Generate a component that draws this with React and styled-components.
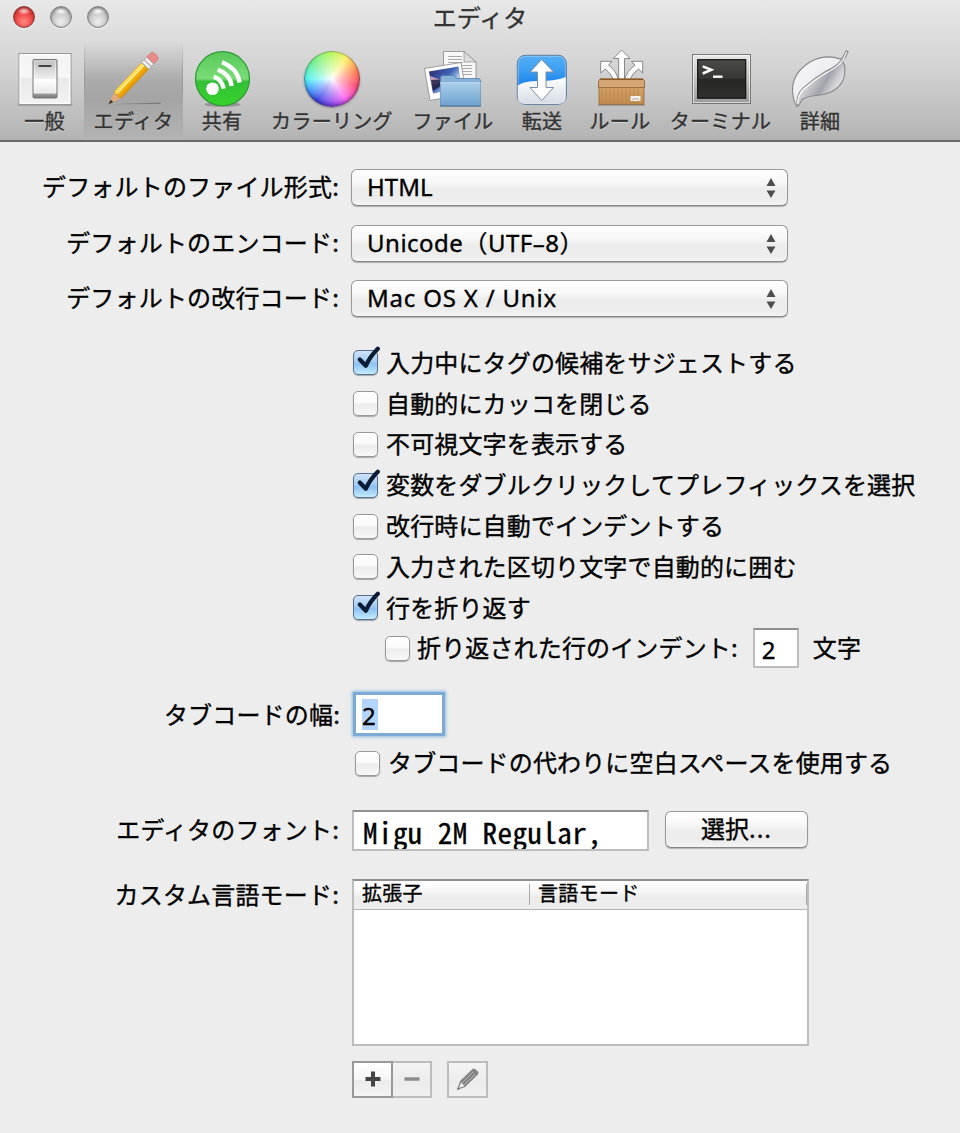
import React from 'react';
import styled, { createGlobalStyle, css } from 'styled-components';

const GlobalStyle = createGlobalStyle`
  * { box-sizing: border-box; }
  body {
    margin: 0;
    background: #ededed;
    color: #000;
    font-family: 'Noto Sans', 'Noto Sans CJK JP', sans-serif;
    font-size: 24px;
    -webkit-text-stroke: 0.35px currentColor;
  }
`;

const jp = css`font-family: 'Noto Sans CJK JP', sans-serif;`;

const Window = styled.div`
  width: 960px;
  height: 1133px;
  overflow: hidden;
  background: #ededed;
`;

const Header = styled.header`
  height: 142px;
  background: linear-gradient(#e8e8e8, #d2d2d2 50%, #b3b3b3);
  border-bottom: 2px solid #6a6a6a;
`;

const TitleBar = styled.div`
  display: grid;
  grid-template-columns: 110px 1fr 110px;
  height: 42px;
`;

const Lights = styled.div`
  display: flex;
  gap: 15px;
  padding: 6px 0 0 13px;
`;

const Light = styled.span`
  width: 22px;
  height: 22px;
  border-radius: 50%;
  border: 1px solid ${(p) => (p.$red ? '#8f3a3a' : '#808080')};
  background: ${(p) =>
    p.$red
      ? 'radial-gradient(ellipse 7px 4px at 50% 20%, #ffd6d6, transparent), radial-gradient(circle at 50% 75%, #ff8a80 0, #f04a4a 45%, #d0282c 100%)'
      : 'radial-gradient(ellipse 7px 4px at 50% 20%, #fff, transparent), radial-gradient(circle at 50% 75%, #efefef 0, #c9c9c9 50%, #a0a0a0 100%)'};
  box-shadow: inset 0 1px 3px rgba(0, 0, 0, 0.35), 0 1px 0 rgba(255, 255, 255, 0.6);
`;

const Title = styled.div`
  ${jp}
  color: #333;
  font-size: 24px;
  line-height: 33px;
  text-align: center;
`;

const Toolbar = styled.nav`
  display: flex;
  padding-left: 5px;
`;

const Tool = styled.div`
  display: flex;
  flex-direction: column;
  align-items: center;
  width: ${(p) => p.$w}px;
  height: 95px;
  padding-top: 6px;
  ${(p) =>
    p.$active &&
    css`
      background: linear-gradient(rgba(0, 0, 0, 0), rgba(0, 0, 0, 0.17) 40%, rgba(0, 0, 0, 0.17) 60%, rgba(0, 0, 0, 0.02));
      border: solid;
      border-width: 0 1px;
      border-image: linear-gradient(transparent, #999 45%, #aaa 70%, transparent) 1;
    `}
`;

const ToolLabel = styled.span`
  ${jp}
  font-size: 20px;
  line-height: 22px;
  letter-spacing: 0.3px;
  color: #333;
  white-space: nowrap;
  text-shadow: 0 1px 0 rgba(255, 255, 255, 0.45);
  -webkit-text-stroke-width: 0.4px;
`;

const IconBox = styled.div`
  height: 62px;
  display: flex;
  justify-content: center;
`;

const Wheel = styled.div`
  width: 56px;
  height: 56px;
  margin-top: 3px;
  border-radius: 50%;
  background:
    radial-gradient(circle, #fff 0, rgba(255, 255, 255, 0.6) 22%, rgba(255, 255, 255, 0) 66%),
    conic-gradient(#b8f860, #fff06a 35deg, #ff7850 75deg, #ff4a70 105deg, #ff60f0 145deg, #9048f0 180deg, #4048e8 215deg, #40a0ff 245deg, #50f4f0 270deg, #70f090 310deg, #b8f860);
  box-shadow: inset 0 0 0 1px rgba(60, 60, 60, 0.35), inset 0 -2px 4px rgba(0, 0, 60, 0.4), 0 1px 2px rgba(0, 0, 0, 0.35);
`;

const Svg = ({ cx, w = 64, children }) => (
  <svg width={w} height="62" viewBox={`${cx - w / 2} 48 ${w} 62`}>{children}</svg>
);

const Grad = ({ id, stops, x2 = 0, y2 = 1 }) => (
  <linearGradient id={id} x1="0" y1="0" x2={x2} y2={y2}>
    {stops.map(([o, c]) => <stop key={o} offset={o} stopColor={c} />)}
  </linearGradient>
);

const SwitchIcon = () => (
  <Svg cx={44.5}>
    <defs>
      <Grad id="plate" stops={[[0, '#f4f4f4'], [0.46, '#f6f6f6'], [0.5, '#e9e9e9'], [1, '#f3f3f3']]} />
      <Grad id="rocker" stops={[[0, '#bdbdbd'], [0.5, '#efefef'], [0.52, '#fff'], [0.86, '#e8e8e8'], [0.9, '#999'], [1, '#777']]} />
    </defs>
    <path d="M17 105.3h55" stroke="#777" strokeOpacity=".4" strokeWidth="1.2" />
    <rect x="18.5" y="53.5" width="52" height="51" fill="url(#plate)" stroke="#999" />
    <rect x="19.7" y="54.7" width="49.5" height="48.6" fill="none" stroke="#fff" />
    <rect x="32.5" y="59.5" width="24" height="38.5" rx="1" fill="url(#rocker)" stroke="#777" />
    <rect x="34" y="61" width="21" height="32" fill="none" stroke="#fff" strokeOpacity=".45" />
    <path d="M38 66h13" stroke="#444" strokeWidth="2" />
  </Svg>
);

const PencilIcon = () => (
  <Svg cx={133.5}>
    <defs>
      <Grad id="shaft" stops={[[0, '#ffe36a'], [0.35, '#ffd43a'], [0.5, '#f5b312'], [1, '#e09000']]} />
    </defs>
    <path d="M110 104.3 160 102.5V104Z" fill="#666" opacity=".65" />
    <g transform="translate(108 104.5) rotate(-46.5)">
      <path d="M0 0 14-4.8V4.8Z" fill="#e0a878" />
      <path d="M0 0 5-1.8V1.8Z" fill="#333" />
      <path d="M14-4.8 12-2 14 0 12 2.6 14 4.8H53V-4.8Z" fill="url(#shaft)" stroke="#c08a18" strokeWidth=".5" />
      <path d="M14-1.5H53" stroke="#fff3a0" strokeWidth="1.2" />
      <path d="M53-5h8V5h-8Z" fill="#c8c8c8" stroke="#999" strokeWidth=".5" />
      <path d="M55-4.5v9M59-4.5v9" stroke="#fff" strokeWidth="1.5" />
      <path d="M61-5h5q3 0 3 5t-3 5h-5Z" fill="#e98b8b" stroke="#cf7070" strokeWidth=".5" />
    </g>
  </Svg>
);

const ShareIcon = () => (
  <Svg cx={222}>
    <defs>
      <Grad id="green" stops={[[0, '#55c95a'], [0.5, '#7bdc76'], [0.55, '#35bf38'], [1, '#35d42c']]} />
    </defs>
    <ellipse cx="222.5" cy="104.5" rx="18" ry="2.5" fill="#555" opacity=".4" />
    <circle cx="222.5" cy="78.7" r="27" fill="url(#green)" stroke="#2f9b35" strokeWidth="1.3" />
    <circle cx="212.5" cy="88.7" r="6.3" fill="#fff" />
    <g fill="none" stroke="#fff" strokeWidth="4.3">
      <path d="M213.7 76.8Q222 79 223.7 88.7" />
      <path d="M217.7 69.8Q230 74 231.7 86" />
      <path d="M222 62.3Q237 68 239.7 82.5" />
    </g>
  </Svg>
);

const FilesIcon = () => (
  <Svg cx={453}>
    <defs>
      <Grad id="folder" stops={[[0, '#a9cdea'], [1, '#6ea3cf']]} />
      <Grad id="photo" x2={1} y2={0.8} stops={[[0, '#29246a'], [0.5, '#3f62b5'], [0.75, '#b7d0ee'], [1, '#2e3d86']]} />
    </defs>
    <path d="M443.5 51.5h20.5l12 10.5v34h-32.5Z" fill="#f7f7f7" stroke="#888" strokeWidth=".8" />
    <path d="M464 51.5v10.5h12Z" fill="#ddd" stroke="#888" strokeWidth=".7" />
    <path d="M448 56.5h14M448 59.5h14M448 62.5h15M448 65.5h24M448 68.5h24M448 71.5h24M448 74.5h24" stroke="#aaa" strokeWidth="1" />
    <path d="M424.5 68.5 461 62.5 466 94 430 100.5Z" fill="#fff" stroke="#888" strokeWidth=".8" />
    <path d="M429 71.5 458.5 66.5 462 88 433 93.5Z" fill="url(#photo)" />
    <path d="M430 76 444 81 432 86Z" fill="#e8b0c0" opacity=".8" />
    <path d="M431 80 449 79 438 88 433 91Z" fill="#232047" opacity=".85" />
    <path d="M440.5 106V78q0-2.5 2.5-2.5h11q1.5 0 2.5 3H478q2.5 0 2.5 2.5v25Z" fill="#86b2d8" stroke="#527fa8" strokeWidth=".8" />
    <path d="M440.5 83h40v22.5h-40Z" fill="url(#folder)" />
    <path d="M440 82.8h40.5" stroke="#cae2f5" />
    <path d="M440 106h41" stroke="#4a6e90" />
  </Svg>
);

const TransferIcon = () => (
  <Svg cx={542}>
    <defs>
      <Grad id="sky" stops={[[0, '#55b0f6'], [0.3, '#3d9ff2'], [0.6, '#1a82ea'], [1, '#2a8eee']]} />
      <Grad id="snow" stops={[[0, '#fff'], [1, '#d6dce4']]} />
    </defs>
    <rect x="517.3" y="55.3" width="49" height="49" rx="8" fill="url(#sky)" stroke="#5d7a9a" />
    <path d="M517.8 86Q522 81 540 81 556 81 565.8 77V97Q565.8 104 558.5 104H525Q517.8 104 517.8 97Z" fill="url(#snow)" />
    <rect x="518.3" y="56.3" width="47" height="47" rx="7" fill="none" stroke="#fff" strokeOpacity=".3" />
    <path d="M541.7 59.5 553.5 72H546V87.5H553.5L541.7 100.5 530 87.5H537.5V72H530Z" fill="#fff" stroke="#7c8fa5" strokeWidth="1" strokeLinejoin="round" />
  </Svg>
);

const RulesIcon = () => (
  <Svg cx={620}>
    <defs><Grad id="box" stops={[[0, '#d9a869'], [1, '#bd884d']]} /></defs>
    <g fill="#fff" stroke="#7d7d7d" strokeWidth=".9" strokeLinejoin="round">
      <path d="M600.7 61.3H612L608.5 65.2Q616.5 70.5 618.5 80.5H613.5Q611.5 73.5 605 69L600.7 73Z" />
      <path d="M642.7 61.3H631.5L635 65.2Q627 70.5 624.5 80.5H629.5Q632 73.5 638.5 69L642.7 73Z" />
      <path d="M621.7 50 630 58.5H624.5V81H618.7V58.5H613.2Z" />
    </g>
    <rect x="599" y="84" width="45" height="20.5" fill="url(#box)" stroke="#94683a" strokeWidth=".8" />
    <path d="M602 88v16M606 88v16M610 88v16M614 88v16M618 88v16M622 88v16M626 88v16M630 88v16M634 88v16M638 88v16" stroke="#b98449" strokeWidth=".7" />
    <path d="M600 79H643L644.5 81V87.5H598.5V81Z" fill="#d5a573" stroke="#8d6234" strokeWidth=".8" />
    <path d="M600 79.3h43" stroke="#8d5b27" strokeWidth="1.5" />
    <rect x="630.5" y="96" width="10" height="5" fill="#f5f0e8" />
    <path d="M632 99.5q3-2 7 0" stroke="#aaa" fill="none" />
    <path d="M598 105.3h47" stroke="#666" opacity=".5" />
  </Svg>
);

const TerminalIcon = () => (
  <Svg cx={721}>
    <defs>
      <Grad id="frame" stops={[[0, '#e9e9e9'], [1, '#9b9b9b']]} />
      <Grad id="screen" stops={[[0, '#4b4b48'], [0.48, '#373734'], [0.52, '#272724'], [1, '#30302c']]} />
    </defs>
    <rect x="692.5" y="54.5" width="58" height="49" fill="url(#frame)" stroke="#777" />
    <rect x="693.5" y="55.5" width="56" height="47" fill="none" stroke="#fff" strokeOpacity=".6" />
    <rect x="697.7" y="59.7" width="48" height="38.5" fill="url(#screen)" stroke="#111" strokeWidth="1.2" />
    <path d="M702.7 66.3 711.3 69.8 702.7 73.5" fill="none" stroke="#fff" strokeWidth="2.5" />
    <path d="M713 76.7h9.5" stroke="#fff" strokeWidth="2.4" />
  </Svg>
);

const LeafIcon = () => (
  <Svg cx={820}>
    <defs>
      <Grad id="leafTop" x2={1} stops={[[0, '#f8f8fa'], [0.5, '#ededf0'], [1, '#dcdce0']]} />
      <Grad id="leafLow" x2={1} y2={0.6} stops={[[0, '#eee'], [0.4, '#dedee2'], [0.68, '#a2a2aa'], [0.82, '#d0d0d5'], [1, '#eee']]} />
    </defs>
    <path d="M846 51Q843 58 840.5 59 825 53.500 810 62 792.5 73 792.5 90 793 101 797 106.500 799 106 802 99.500 806 96.500 820 95 838 92.500 843.500 79 847 69 842.500 60.500 846.500 57 848 51.500Z" fill="url(#leafLow)" stroke="#888" strokeWidth="1.1" />
    <path d="M841 60Q825 54.5 810 63 793.5 74 793.5 90 794 99 796.5 105 796 94 803 87 813 78 825 71 836 66 841 60Z" fill="url(#leafTop)" />
    <path d="M797 105Q796 95 803 88 813 79 825 72 837 66 842 59.5" fill="none" stroke="#888" strokeWidth="1" />
    <path d="M798 104Q797 96 804 89 814 80 826 73 838 67 843 60L846.5 52" fill="none" stroke="#fff" strokeWidth="1.1" />
  </Svg>
);

const TOOLS = [
  { label: '一般', w: 79, icon: <SwitchIcon /> },
  { label: 'エディタ', w: 99, icon: <PencilIcon />, active: true },
  { label: '共有', w: 78, icon: <ShareIcon /> },
  { label: 'カラーリング', w: 142, icon: <Wheel /> },
  { label: 'ファイル', w: 100, icon: <FilesIcon /> },
  { label: '転送', w: 78, icon: <TransferIcon /> },
  { label: 'ルール', w: 78, icon: <RulesIcon /> },
  { label: 'ターミナル', w: 123, icon: <TerminalIcon /> },
  { label: '詳細', w: 76, icon: <LeafIcon /> },
];

const Form = styled.main`
  padding-top: 27px;
`;

const Row = styled.div`
  display: grid;
  grid-template-columns: 340px 1fr;
  column-gap: ${(p) => p.$gap ?? 12}px;
  margin-top: ${(p) => p.$mt ?? 0}px;
  margin-bottom: ${(p) => p.$mb ?? 0}px;
`;

const Label = styled.label`
  ${jp}
  line-height: ${(p) => p.$h}px;
  height: ${(p) => p.$h}px;
  padding-right: ${(p) => p.$pr ?? 1}px;
  letter-spacing: 0.18px;
  text-align: right;
  white-space: nowrap;
`;

const raised = css`
  border: 1px solid #999;
  border-bottom-color: #858585;
  border-radius: 6px;
  background: linear-gradient(#fff, #f7f7f7 35%, #ececec 55%, #ededed 85%, #f4f4f4);
  box-shadow: 0 1px 1px rgba(0, 0, 0, 0.25);
`;

const Select = styled.div`
  ${raised}
  display: flex;
  align-items: center;
  justify-content: space-between;
  width: 437px;
  height: 37px;
  padding: 0 11px 0 15px;
  white-space: pre;
`;

const SelectText = styled.span`
  height: 34px;
  margin-bottom: 2px;
  font-size: 24px;
  line-height: 34px;
  letter-spacing: ${(p) => p.$ls ?? 0}px;
`;

const Arrows = () => (
  <svg width="10" height="22" viewBox="0 0 10 22" fill="#4d4d4d">
    <path d="M5 1 9.5 9H.5ZM5 21 9.5 13.5H.5Z" />
  </svg>
);

const Check = styled.div`
  display: flex;
  align-items: center;
  height: 40.8px;
  padding-left: ${(p) => p.$indent ?? 353}px;
`;

const Box = styled.span`
  position: relative;
  flex: none;
  width: 25px;
  height: 25px;
  margin-right: ${(p) => p.$mr ?? 8}px;
  border: 1px solid ${(p) => (p.$on ? '#57708e' : '#989898')};
  border-radius: 5px;
  background: ${(p) =>
    p.$on ? 'linear-gradient(#cfe3f7, #a5cdf3 45%, #8cc0f0 55%, #c4ecff)' : 'linear-gradient(#fff, #fafafa 45%, #ececec 55%, #f8f8f8)'};
  box-shadow: 0 1px 1px rgba(0, 0, 0, 0.3);

  svg { position: absolute; left: 2px; top: -5px; }
`;

const CheckText = styled.span`
  ${jp}
  height: 34px;
  margin-bottom: 2px;
  line-height: 34px;
  letter-spacing: 0.15px;
  white-space: nowrap;
`;

const CheckBox = ({ on, mr }) => (
  <Box $on={on} $mr={mr}>
    {on && (
      <svg width="25" height="25" viewBox="0 0 25 25">
        <path d="M3.8 13.5 9.8 19.8Q14 10.5 21.8 2.8" fill="none" stroke="#0a1c36" strokeWidth="4.2" strokeLinecap="round" strokeLinejoin="round" />
      </svg>
    )}
  </Box>
);

const CHECKS = [
  ['入力中にタグの候補をサジェストする', true],
  ['自動的にカッコを閉じる', false],
  ['不可視文字を表示する', false],
  ['変数をダブルクリックしてプレフィックスを選択', true],
  ['改行時に自動でインデントする', false],
  ['入力された区切り文字で自動的に囲む', false],
  ['行を折り返す', true],
];

const field = css`
  background: #fff;
  border: 2px solid #bdbdbd;
  border-top-color: #8f8f8f;
`;

const IndentField = styled.div`
  ${field}
  width: 46px;
  height: 40px;
  margin: 0 14px 0 15px;
  padding-left: 7px;
  line-height: 39px;
`;

const TabField = styled.div`
  width: 86px;
  height: 38px;
  margin: 4px;
  padding: 4px 0 0 6px;
  background: #fff;
  box-shadow: 0 0 0 3px #7dabd6, 0 0 3px 4px #8fbbe2;

  span {
    display: block;
    width: 16px;
    height: 31px;
    background: #b3d5fd;
    line-height: 34px;
  }
`;

const FontRow = styled.div`
  display: flex;
  gap: 16px;
`;

const FontField = styled.div`
  ${field}
  width: 297px;
  height: 41px;
  padding-left: 9px;
  overflow: hidden;
  font-family: 'Noto Sans Mono CJK JP', 'Liberation Mono', monospace;
  font-size: 29px;
  letter-spacing: 0.45px;
  line-height: 38px;
  white-space: pre;
`;

const Button = styled.div`
  ${raised}
  ${jp}
  width: 143px;
  height: 37px;
  margin-top: 1px;
  line-height: 32px;
  text-align: center;

  span { letter-spacing: 1px; }
`;

const Table = styled.div`
  width: 457px;
  height: 167px;
  background: #fff;
  border: 2px solid #bdbdbd;
  border-top-color: #8f8f8f;
`;

const TableHead = styled.div`
  ${jp}
  display: flex;
  align-items: center;
  height: 29px;
  font-size: 20px;
  letter-spacing: 0.3px;
  background: linear-gradient(#fff, #f6f6f6 40%, #ebebeb 60%, #eee);
  border-bottom: 1px solid #b5b5b5;
`;

const Th = styled.div`
  width: ${(p) => p.$w}px;
  height: 21px;
  padding-left: 8px;
  line-height: 18px;
  border-right: 1px solid #aaa;
`;

const Actions = styled.div`
  display: flex;
  padding: 15px 0 0 352px;
`;

const Action = styled.div`
  display: flex;
  align-items: center;
  justify-content: center;
  width: ${(p) => p.$w ?? 40}px;
  height: 37px;
  margin-left: ${(p) => p.$ml ?? 0}px;
  border: 2px solid ${(p) => (p.$off ? '#bcbcbc' : '#999')};
  ${(p) => p.$joined && 'border-left: 0;'}
  background: ${(p) => (p.$off ? 'linear-gradient(#f4f4f4, #ebebeb 55%, #f0f0f0)' : 'linear-gradient(#fff, #f5f5f5 50%, #eaeaea 52%, #f4f4f4)')};
`;

export default function App() {
  return (
    <Window>
      <GlobalStyle />
      <Header>
        <TitleBar>
          <Lights><Light $red /><Light /><Light /></Lights>
          <Title>エディタ</Title>
        </TitleBar>
        <Toolbar>
          {TOOLS.map((t) => (
            <Tool key={t.label} $w={t.w} $active={t.active}>
              <IconBox>{t.icon}</IconBox>
              <ToolLabel>{t.label}</ToolLabel>
            </Tool>
          ))}
        </Toolbar>
      </Header>
      <Form>
        <Row $gap={11} $mb={19}>
          <Label $h={34}>デフォルトのファイル形式:</Label>
          <Select><SelectText>HTML</SelectText><Arrows /></Select>
        </Row>
        <Row $gap={11} $mb={18}>
          <Label $h={34}>デフォルトのエンコード:</Label>
          <Select><SelectText $ls={0.5}>Unicode（UTF–8）</SelectText><Arrows /></Select>
        </Row>
        <Row $gap={11} $mb={25.5}>
          <Label $h={34}>デフォルトの改行コード:</Label>
          <Select><SelectText $ls={0.8}>Mac OS X / Unix</SelectText><Arrows /></Select>
        </Row>
        {CHECKS.map(([text, on]) => (
          <Check key={text}><CheckBox on={on} /><CheckText>{text}</CheckText></Check>
        ))}
        <Check $indent={385}>
          <CheckBox mr={7} />
          <CheckText>折り返された行のインデント:</CheckText>
          <IndentField>2</IndentField>
          <CheckText>文字</CheckText>
        </Check>
        <Row $gap={12} $mt={22.1} $mb={6}>
          <Label $h={46} $pr={0}>タブコードの幅:</Label>
          <TabField><span>2</span></TabField>
        </Row>
        <Check $indent={355}><CheckBox /><CheckText>タブコードの代わりに空白スペースを使用する</CheckText></Check>
        <Row $mt={26} $mb={28}>
          <Label $h={38}>エディタのフォント:</Label>
          <FontRow>
            <FontField>Migu 2M Regular,</FontField>
            <Button>選択<span>...</span></Button>
          </FontRow>
        </Row>
        <Row>
          <Label $h={30}>カスタム言語モード:</Label>
          <Table>
            <TableHead><Th $w={176}>拡張子</Th><Th $w={277}>言語モード</Th></TableHead>
          </Table>
        </Row>
        <Actions>
          <Action $w={41}>
            <svg width="16" height="16"><path d="M8 .5v15M.5 8h15" stroke="#444" strokeWidth="4" /></svg>
          </Action>
          <Action $off $joined $w={39}>
            <svg width="16" height="16"><path d="M.5 8h15" stroke="#8c8c8c" strokeWidth="3.5" /></svg>
          </Action>
          <Action $off $ml={15} $w={41}>
            <svg width="24" height="24" viewBox="0 0 24 24">
              <path d="M1 23 4 14 17 1.5Q19 1 22 4.5 23 6 22 7.5L9 20Z" fill="#858585" />
              <path d="M3 21 5 15.5 8.5 19Z" fill="#eee" />
              <path d="M1 23 2 20 4 22Z" fill="#777" />
              <path d="M6.5 15.5 17 5M8.5 17.5 19.5 7" stroke="#b5b5b5" strokeWidth="1" />
            </svg>
          </Action>
        </Actions>
      </Form>
    </Window>
  );
}
